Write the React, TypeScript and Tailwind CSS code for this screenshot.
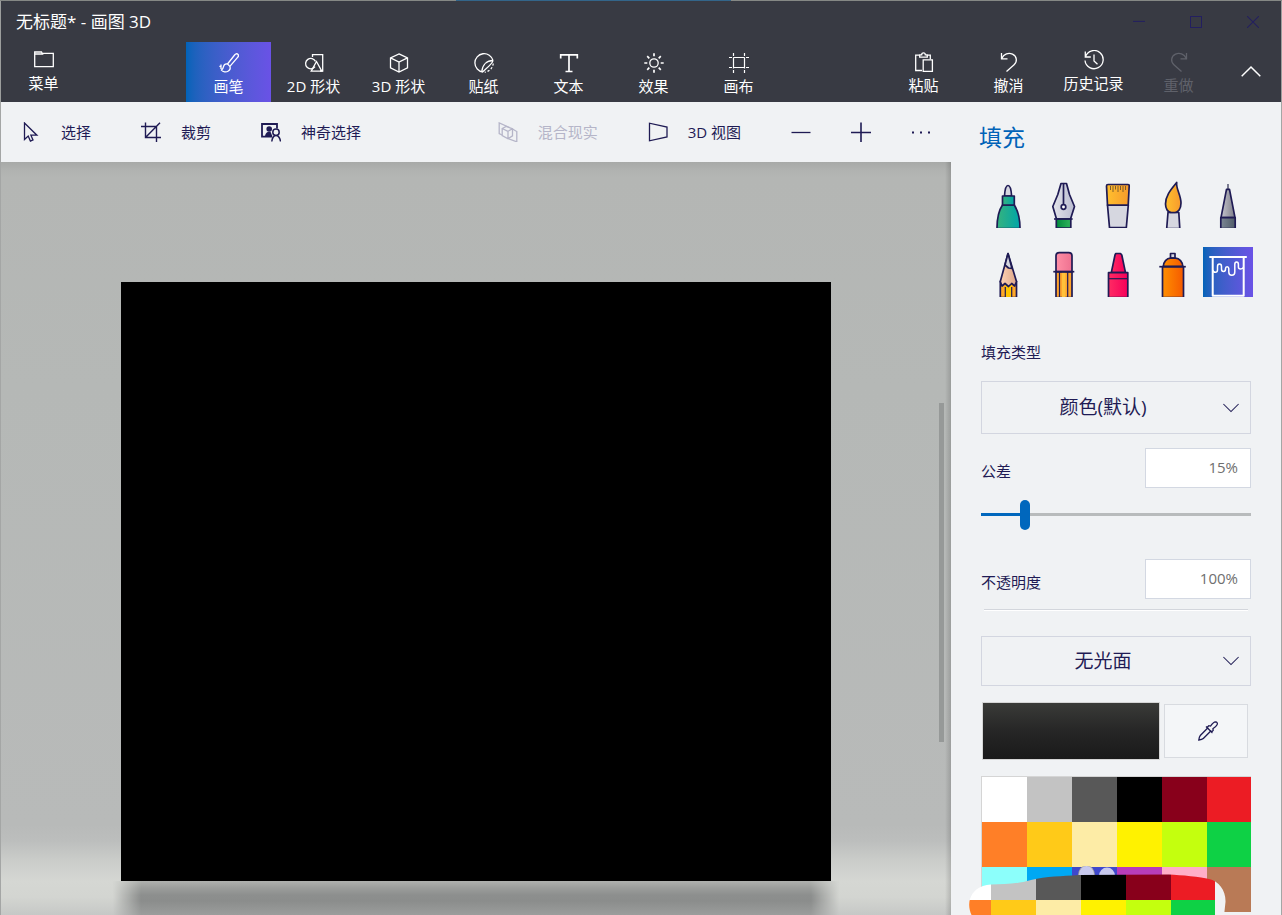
import React, { useState } from 'react';

interface IconProps {
    className?: string;
    children: React.ReactNode;
}

// Thin outline icon on a 20px grid
const Icon: React.FC<IconProps> = ({ className = 'size-5', children }) => (
    <svg
        viewBox="0 0 20 20"
        className={`${className} shrink-0`}
        fill="none"
        stroke="currentColor"
        strokeWidth="1.3"
        aria-hidden="true"
    >
        {children}
    </svg>
);

const icons = {
    menu: <path d="M.7 2h6.8l1 2H.7M.7 1.3v15.4h18.6V3.3H8" />,
    brush: (
        <>
            <path d="M18.8 1.2c-1-1-2.300-.2-3.200.8L8.500 11l2.400 2.400 7.700-9c.9-1 1.200-2.200.2-3.200z" />
            <path d="M8.500 11c-2-.4-3.500.7-4 2.600-.3 1.700-.4 2.200-2 3.500 1.500 1.800 4.500 2.400 6.500 1.200 2-1.100 2.600-3 1.900-4.900M.5 13l2 1.500M2 11.500v4.500" />
        </>
    ),
    shapes2d: (
        <>
            <path d="M8.500 4V1.700h10.200V18H16M11 13.700a5.200 5.200 0 1 1 .5-5.300" />
            <path d="M12.500 8.500L7.200 18.200h10.600z" />
        </>
    ),
    cube: <path d="M10 .9l8.500 3.900v10L10 19l-8.500-4.200v-10zM1.500 4.800L10 9l8.500-4.200M10 9v10" />,
    sticker: (
        <>
            <path d="M9 19A9.200 9.200 0 1 1 19 7.500" />
            <path d="M19 7.500C13 7.500 8.500 11.500 7.800 18.500M19 7.500c-.5 3.500-7.500 8.500-10.500 11.500" />
            <path d="M19.200 10.500a9.500 9.500 0 0 1-8.500 8.700" strokeDasharray="2.200 1.800" />
        </>
    ),
    text: <path d="M1.700 5.500V1.800h16.600v3.700M10 1.800v16.600M6.500 18.500h7" strokeWidth="1.700" />,
    sun: (
        <>
            <circle cx="10" cy="10" r="4.200" />
            <path d="M10 .3v3M10 16.700v3M.3 10h3M16.700 10h3M3.200 3.200l2.100 2.100M14.700 14.700l2.100 2.100M3.200 16.800l2.100-2.100M14.700 5.300l2.100-2.100" strokeWidth="1.700" />
        </>
    ),
    canvas: <path d="M4.500 0v20M15.500 0v20M0 4.500h20M0 14.500h20" strokeWidth="1.200" strokeDasharray="3 1.400 11.200 1.400 3" />,
    paste: (
        <>
            <path d="M8 18.500H1.700V3.200h4M12.300 3.200h4v4M5.700 5.200V2.800h2c0-2.700 3.600-2.700 3.600 0h2v2.400z" />
            <path d="M9.200 7.800h9.200v11.500H9.200z" />
        </>
    ),
    undo: <path d="M2.500 1v5.800h6M2.700 6.500C5 2 9.500.3 13.500 2.200c4.600 2.200 5 7.500 1.600 10.600L7.500 19.500" />,
    history: <path d="M1.300 1.500V7h5.500M1.500 6.500A9.100 9.100 0 1 1 1 10.500M10 4.500V11l3.500 3.200" />,
    redo: <path d="M17.500 1v5.800h-6M17.300 6.500C15 2 10.500.3 6.500 2.200c-4.600 2.200-5 7.500-1.600 10.600l7.600 6.700" />,
    pointer: <path d="M3.500 1v16.500l3.700-3.400 2.200 5 2.600-1.200-2.100-4.700h6z" />,
    crop: <path d="M4.500.5v15h15.500M0 4.500h15.500V20M19 .8L4.500 15.500" strokeWidth="1.400" />,
    magic: (
        <>
            <path d="M16 6.500V2H1v12.700h10" strokeWidth="1.800" />
            <path d="M4 14.500c.2-2.500 1.300-4 3-4.700h2.500l2 4.700z" fill="currentColor" stroke="none" />
            <circle cx="8.200" cy="7" r="2.800" fill="currentColor" stroke="none" />
            <circle cx="15" cy="10.200" r="3.200" fill="#f0f2f4" strokeWidth="1.500" />
            <path d="M10.800 19.500c.4-3.500 1.600-5.500 3.700-6M15.500 13.500c2 .5 3.500 2.500 4 6" strokeWidth="1.500" />
        </>
    ),
    mixed: (
        <>
            <path d="M4 13L1.200 11.500V.9L11.500 5.500" />
            <path d="M10 16.500l8.800 3.300V9.500L14.500 7" />
            <path d="M4.200 6.500l4-2 6.300 2.300v7L10 16.700l-5.800-3.200zM4.200 6.500L10 9.300v7.400M10 9.300l4.500-2.500" />
        </>
    ),
    view3d: <path d="M1.500 1.200v17.600l17.500-3.800V5z" />,
    chevronUp: <path d="M.7 14.300L10 5l9.300 9.300" strokeWidth="1.500" />,
    minus: <path d="M.5 10.500h19" />,
    plus: <path d="M0 10.500h20M10 .5v20" strokeWidth="1.600" />,
    dots: (
        <g fill="currentColor" stroke="none">
            <path d="M1 9.500h2v2H1zM9 9.500h2v2H9zM17 9.500h2v2h-2z" />
        </g>
    ),
    dropper: (
        <>
            <path d="M10.200 6.500L2.300 14.500c-.8.900-1.200 2.200-1.500 4.500 2.200-.2 3.600-.6 4.500-1.500l8-8" />
            <path d="M8 5.500l6.500 6.500M9 6.500l1.800-1.800 1.700.4C14 3 15.500.9 17.400.8c1.900 0 2.400 1.800 1.500 3.200-.8 1.400-2.500 2.600-4 3.700l.3 1.700-1.800 1.800" />
        </>
    ),
};

const tabs = [
    { label: '画笔', icon: icons.brush },
    { label: '2D 形状', icon: icons.shapes2d },
    { label: '3D 形状', icon: icons.cube },
    { label: '贴纸', icon: icons.sticker },
    { label: '文本', icon: icons.text },
    { label: '效果', icon: icons.sun },
    { label: '画布', icon: icons.canvas },
];

const palette = [
    '#ffffff', '#c3c3c3', '#585858', '#000000', '#88001b', '#ec1c24',
    '#ff7f27', '#ffca18', '#fdeca6', '#fff200', '#c4ff0e', '#0ed145',
    '#8cfffb', '#00a8f3', '#3f48cc', '#b83dba', '#ffaec8', '#b97a56',
];

const brushes = [
    {
        name: '马克笔',
        art: (
            <>
                <path d="M21.500 18c.3-5 1.500-10.500 3.500-10.500s3.300 5.500 3.600 10.500z" fill="#d5d6e0" />
                <path d="M19.500 27C16 32 14 40 14 50.500h23C37 40 34.500 32 31.300 27z" fill="url(#teal)" />
                <path d="M19.500 18h11.800v9H19.500z" fill="url(#teal)" />
            </>
        ),
    },
    {
        name: '书法笔',
        art: (
            <>
                <path d="M23 5.500h5.500l3 11 5 12L32.500 41h-14l-3.700-12.500 5-12z" fill="url(#nib)" />
                <path d="M18.300 41h14.500v9H18.300z" fill="url(#green)" />
                <path d="M16 41h18.700M25.500 6v20" />
                <circle cx="25.500" cy="29" r="2.300" fill="#fff" />
            </>
        ),
    },
    {
        name: '油画笔',
        art: (
            <>
                <path d="M14.500 27.200h20.800l-2 22.500H16.500z" fill="#d6d7e0" />
                <path d="M15 6.500h20q1.300 0 1.200 1.500l-1 19.200H14.500L13.500 8q0-1.500 1.500-1.500z" fill="url(#amber)" />
                <path d="M17.500 8v4M20 8v6M22.500 8v3.500M25 8v6M27.500 8v4M30 8v6M32.500 8v4" stroke="#7e5c2b" strokeWidth="1" />
            </>
        ),
    },
    {
        name: '水彩',
        art: (
            <>
                <path d="M20 34.500h10.800l1 16H18.700z" fill="#d6d7e0" />
                <path d="M28.700 4.500c-1 6 4.300 12.500 4.300 20.500 0 6-3 9.500-6 9.500h-3.500c-4 0-6-4.500-6-8.500C17.500 17 24 10.500 28.700 4.500z" fill="url(#amber)" />
            </>
        ),
    },
    {
        name: '像素笔',
        art: (
            <>
                <path d="M25 6v5" stroke="#66677f" />
                <path d="M23.500 11.300h3L32 39.700H18z" fill="url(#gray)" />
                <path d="M17.800 39.700h14.400v10.800H17.800z" fill="url(#slate)" />
            </>
        ),
    },
    {
        name: '铅笔',
        art: (
            <>
                <path d="M17.300 34.500V50.500h16.200v-16l-4-3-8 0z" fill="#ffa827" />
                <path d="M22.300 38h6.500v12.500h-6.500z" fill="#ffc400" stroke="none" />
                <path d="M25 6.500l8.500 28-1.800 4.500-3-2.500-3.200 3-3.500-3-3 2.500-1.700-4.500z" fill="url(#skin)" />
                <path d="M25 6.500l4 15-3.500-.5-3.500-3z" fill="#d6d7e0" />
                <path d="M22.300 40v10M28.700 40v10" strokeWidth="1.200" />
            </>
        ),
    },
    {
        name: '橡皮擦',
        art: (
            <>
                <path d="M18 24.700h16v26H18z" fill="#ffa32b" />
                <path d="M24 25.500h3.500v25H24z" fill="#ffc13b" stroke="none" />
                <path d="M18 24.700V9q0-3.300 3.300-3.300h9.400Q34 5.700 34 9v15.700z" fill="url(#pink)" />
                <path d="M15.300 24.700h21" />
                <path d="M21.500 24.700v26M29.700 24.700v26" strokeWidth="1.200" />
            </>
        ),
    },
    {
        name: '蜡笔',
        art: (
            <>
                <path d="M22.800 6.500h4.700l1.300 1.500 3.700 17.700H18.300L22 8z" fill="url(#red)" />
                <path d="M15.500 25.700h19.300v25H15.500z" fill="url(#red)" />
                <path d="M15.500 31.700h19.300" strokeWidth="1.200" />
            </>
        ),
    },
    {
        name: '喷漆罐',
        art: (
            <>
                <path d="M22.500 6.500h4.500V11h-4.500z" fill="#d6d7e0" />
                <path d="M15.300 19.700c0-5 3.500-8.500 7.200-8.500h5c3.700 0 7.300 3.500 7.300 8.500z" fill="url(#orange)" />
                <path d="M14.500 19.700h21v31h-21z" fill="url(#orange)" />
                <path d="M11.300 19.700h26.500" />
            </>
        ),
    },
    {
        name: '填充',
        art: (
            <g stroke="#fff" fill="none">
                <path d="M6.300 10h37.500M9.700 10v38.700h31V10" strokeWidth="2" />
                <path d="M9.700 23q.5 2.300 2.600 2.300 2.200 0 2.200-2.300v-3.500q0-2.500 2-2.500t2 2.500V22q0 2.500 2 2.500t2-2.500v-.5q0-1.800 1.600-1.800t1.700 1.800V25q0 3.300 3 3.300t3-3.300v-7.500q0-2.500 1.800-2.500t1.800 2.500v2.500q0 2 2.200 2t3-2" strokeWidth="1.500" />
            </g>
        ),
    },
];

// Fills shared by the brush drawings
const BrushGradients: React.FC = () => {
    const fills = [
        ['teal', '#36b37e', '#00a5a8'],
        ['nib', '#e3e4ea', '#b9bbd0'],
        ['green', '#008a3c', '#2fb45a'],
        ['amber', '#ffc02e', '#f79a2c'],
        ['gray', '#c5c5cd', '#7c7c88'],
        ['slate', '#7c8794', '#505c68'],
        ['skin', '#ffd2b3', '#dca78b'],
        ['pink', '#ff8fa6', '#ee7190'],
        ['red', '#ff2b63', '#f5005a'],
        ['orange', '#ff8f00', '#f55a00'],
    ];
    return (
        <svg className="absolute size-0" aria-hidden="true">
            <defs>
                {fills.map(([id, from, to]) => (
                    <linearGradient key={id} id={id}>
                        <stop offset="0" stopColor={from} />
                        <stop offset="1" stopColor={to} />
                    </linearGradient>
                ))}
            </defs>
        </svg>
    );
};

interface RibbonButtonProps {
    label: string;
    icon: React.ReactNode;
    className?: string;
    disabled?: boolean;
    onClick?: () => void;
}

const RibbonButton: React.FC<RibbonButtonProps> = ({ label, icon, className = 'pt-[10px]', disabled, onClick }) => (
    <button
        type="button"
        disabled={disabled}
        onClick={onClick}
        className={`flex h-[60px] w-[85px] flex-col items-center gap-[3px] text-[15px] leading-5 whitespace-nowrap disabled:text-[#5f616a] ${className}`}
    >
        <Icon>{icon}</Icon>
        {label}
    </button>
);

const ToolbarButton: React.FC<RibbonButtonProps> = ({ label, icon, disabled }) => (
    <button
        type="button"
        disabled={disabled}
        className="flex h-full items-center gap-5 pr-[30px] pl-5 text-[15px] leading-5 whitespace-nowrap disabled:text-[#b5b5c8]"
    >
        <Icon>{icon}</Icon>
        {label}
    </button>
);

interface DropDownProps {
    label: string;
    id: string;
    value: string;
    className: string;
}

const DropDown: React.FC<DropDownProps> = ({ label, id, value, className }) => (
    <div className={`relative ${className}`}>
        <select
            id={id}
            aria-label={label}
            defaultValue={value}
            className="size-full appearance-none border border-[#d3d6e0] bg-transparent pr-[38px] pl-3 text-[19px] [text-align-last:center]"
        >
            <option>{value}</option>
        </select>
        <Icon className="pointer-events-none absolute top-1/2 right-3 size-4 -translate-y-1/2">
            <path d="M.5 5L10 14.500l9.500-9.500" />
        </Icon>
    </div>
);

interface PercentFieldProps {
    id: string;
    label: string;
    value: number;
    onChange: (value: number) => void;
    className: string;
}

const PercentField: React.FC<PercentFieldProps> = ({ id, label, value, onChange, className }) => (
    <div className={`flex items-end justify-between ${className}`}>
        <label htmlFor={id} className="pb-[7px] text-[15px] leading-5">{label}</label>
        <input
            id={id}
            type="text"
            value={`${value}%`}
            onChange={(e) => onChange(Math.min(100, parseInt(e.target.value, 10) || 0))}
            className="h-10 w-[106px] border border-[#d3d8e2] bg-white pr-3 pb-0.5 text-right text-[15px] text-[#6f6f6f]"
        />
    </div>
);

const App: React.FC = () => {
    const [activeTab, setActiveTab] = useState('画笔');
    const [activeBrush, setActiveBrush] = useState('填充');
    const [tolerance, setTolerance] = useState(15);
    const [opacity, setOpacity] = useState(100);

    return (
        <div className="flex h-screen flex-col overflow-hidden bg-[#f0f2f4] font-['Open_Sans','Noto_Sans_CJK_SC',sans-serif] text-[#1f1b54]">
            <BrushGradients />
            <div className="flex h-px shrink-0 justify-center bg-[#858885]">
                <div className="mr-[95px] w-[275px] bg-[#33658a]" />
            </div>

            {/* Title bar and ribbon */}
            <header className="shrink-0 border-x border-[#9c9e9d] bg-[#383a43] text-white">
                <div className="flex h-[41px] items-center justify-between pl-[15px]">
                    <h1 className="text-[17px]">无标题* - 画图 3D</h1>
                    <div className="flex h-full items-center text-[#231f60]">
                        <button type="button" aria-label="最小化" className="flex w-[57px] justify-center">
                            <Icon className="size-3"><path d="M0 9h20" strokeWidth="1.700" /></Icon>
                        </button>
                        <button type="button" aria-label="最大化" className="flex w-[57px] justify-center">
                            <Icon className="size-3"><path d="M.8.8h18.400v18.400H.8z" strokeWidth="1.700" /></Icon>
                        </button>
                        <button type="button" aria-label="关闭" className="flex w-[57px] justify-center">
                            <Icon className="size-3"><path d="M0 0l20 20M20 0L0 20" strokeWidth="1.700" /></Icon>
                        </button>
                    </div>
                </div>
                <div className="flex h-[60px]">
                    <RibbonButton label="菜单" icon={icons.menu} className="pt-2" />
                    <nav className="ml-[100px] flex">
                        {tabs.map((tab) => (
                            <RibbonButton
                                key={tab.label}
                                label={tab.label}
                                icon={tab.icon}
                                onClick={() => setActiveTab(tab.label)}
                                className={activeTab === tab.label ? 'bg-linear-to-r from-[#0063b8] to-[#6a52e6] pt-[11px]' : 'pt-[11px]'}
                            />
                        ))}
                    </nav>
                    <div className="ml-auto flex">
                        <RibbonButton label="粘贴" icon={icons.paste} />
                        <RibbonButton label="撤消" icon={icons.undo} />
                        <RibbonButton label="历史记录" icon={icons.history} className="pt-2" />
                        <RibbonButton label="重做" icon={icons.redo} disabled />
                        <button type="button" aria-label="折叠" className="flex w-[60px] items-center justify-center">
                            <Icon>{icons.chevronUp}</Icon>
                        </button>
                    </div>
                </div>
            </header>

            <div className="flex min-h-0 flex-1 border-x border-[#a4a6a5]">
                <main className="flex min-w-0 flex-1 flex-col">
                    {/* Selection and view tools */}
                    <div className="flex h-[60px] shrink-0 items-center">
                        <ToolbarButton label="选择" icon={icons.pointer} />
                        <ToolbarButton label="裁剪" icon={icons.crop} />
                        <ToolbarButton label="神奇选择" icon={icons.magic} />
                        <div className="ml-auto flex h-full">
                            <ToolbarButton label="混合现实" icon={icons.mixed} disabled />
                            <ToolbarButton label="3D 视图" icon={icons.view3d} />
                            <button type="button" aria-label="缩小" className="flex w-[60px] items-center justify-center">
                                <Icon>{icons.minus}</Icon>
                            </button>
                            <button type="button" aria-label="放大" className="flex w-[60px] items-center justify-center">
                                <Icon>{icons.plus}</Icon>
                            </button>
                            <button type="button" aria-label="更多" className="flex w-[60px] items-center justify-center">
                                <Icon>{icons.dots}</Icon>
                            </button>
                        </div>
                    </div>

                    {/* Stage with the canvas standing on a lit floor */}
                    <div className="relative flex flex-1 flex-col bg-[linear-gradient(to_bottom,#a7a9a7_0,#b0b2b0_8px,#b4b6b4_16px,#b5b8b6_30%,#b8bab9_calc(100%_-_90px),#bcbebd_calc(100%_-_74px),#cbcdca_calc(100%_-_54px),#d5d7d3_calc(100%_-_34px),#d3d5d1_calc(100%_-_18px),#c6c8c6_100%)] px-[120px] pt-[120px]">
                        <div className="z-10 flex-1 bg-black" />
                        <div className="-mx-2 h-[34px] bg-[linear-gradient(to_bottom,#afb1ae_0,#9b9d9b_7px,#8d8f8e_14px,#8b8d8c_20px,#9b9d9c_34px)] [mask-image:linear-gradient(to_right,transparent,black_28px,black_calc(100%_-_28px),transparent)]" />
                        <div className="absolute inset-y-0 right-0 w-[6px] bg-linear-to-r from-transparent to-black/15" />
                        <div className="absolute top-[32%] right-[7px] h-[45%] w-[5px] bg-[#969998]" />
                    </div>
                </main>

                {/* Brush settings */}
                <aside className="w-[330px] shrink-0 overflow-hidden px-[30px] pt-[17px]">
                    <h2 className="-ml-0.5 text-[23px] leading-9 text-[#0063b8]">填充</h2>
                    <div className="mt-[23px] ml-0.5 grid w-[270px] grid-cols-5 gap-x-[5px] gap-y-[19px]">
                        {brushes.map((brush) => (
                            <button
                                key={brush.name}
                                type="button"
                                aria-label={brush.name}
                                onClick={() => setActiveBrush(brush.name)}
                                className={activeBrush === brush.name ? 'size-[50px] bg-linear-to-r from-[#0063b8] to-[#6a52e6]' : 'size-[50px]'}
                            >
                                <svg viewBox="0 0 50 50" className="size-[50px]" stroke="#1f1b54" strokeWidth="1.700" strokeLinejoin="round" aria-hidden="true">
                                    {brush.art}
                                </svg>
                            </button>
                        ))}
                    </div>

                    <label htmlFor="fill-type" className="mt-[45px] block text-[15px] leading-5">填充类型</label>
                    <DropDown id="fill-type" label="填充类型" value="颜色(默认)" className="mt-[19px] h-[53px]" />

                    <PercentField id="tolerance" label="公差" value={tolerance} onChange={setTolerance} className="mt-[14px]" />
                    <input
                        type="range"
                        aria-label="公差"
                        value={tolerance}
                        onChange={(e) => setTolerance(Number(e.target.value))}
                        className="mt-3 block h-[30px] w-full appearance-none bg-[length:100%_3px] bg-[position:0_13px] bg-no-repeat [&::-webkit-slider-thumb]:h-[30px] [&::-webkit-slider-thumb]:w-[10px] [&::-webkit-slider-thumb]:appearance-none [&::-webkit-slider-thumb]:rounded-full [&::-webkit-slider-thumb]:bg-[#0067bd]"
                        style={{ backgroundImage: `linear-gradient(to right, #0067bd ${tolerance}%, #b8bbbc ${tolerance}%)` }}
                    />
                    <PercentField id="opacity" label="不透明度" value={opacity} onChange={setOpacity} className="mt-[29px]" />

                    <hr className="mx-[3px] mt-[10px] h-0.5 border-t border-b border-t-[#d3d6dc] border-b-white" />

                    <DropDown id="finish" label="材质" value="无光面" className="mt-[25px] h-[50px]" />

                    <div className="mt-4 flex items-center gap-1 px-px">
                        <button type="button" aria-label="当前颜色" className="h-[58px] w-[178px] border border-[#d5d5d5] bg-linear-to-b from-[#3a3b38] via-[#262626] to-[#1a1a1a]" />
                        <button type="button" aria-label="颜色选取器" className="flex h-[54px] w-[84px] items-center justify-center border border-[#d8dbe0] bg-[#f4f6f8] pl-1">
                            <Icon>{icons.dropper}</Icon>
                        </button>
                    </div>

                    <div className="relative mt-4">
                        <div className="grid grid-cols-[repeat(5,45px)_1fr] border-t border-l border-[#d5d5d5]">
                            {palette.map((color) => (
                                <button key={color} type="button" aria-label={color} className="h-[45px]" style={{ backgroundColor: color }} />
                            ))}
                        </div>
                        {/* Smeared copy of the swatches lying over the last row */}
                        <svg viewBox="0 0 270 50" className="pointer-events-none absolute top-[90px] left-[-12px] h-[50px] w-[270px]" aria-hidden="true">
                            <defs>
                                <clipPath id="smear">
                                    <path d="M3 50C0 44-.5 38 1 33C3 26 10 19 22 18.500C36 18.500 48 18 62 14C78 10 92 10.500 110 9L200 8.500C212 9 232 11 240 13C250 15 257 25 256.500 36L255 50z" />
                                </clipPath>
                            </defs>
                            <ellipse cx="117.500" cy="9" rx="8" ry="9.500" fill="#c8c9ee" stroke="#a9a68c" strokeWidth=".7" />
                            <ellipse cx="138" cy="10" rx="8" ry="8.500" fill="#c8c9ee" />
                            <g clipPath="url(#smear)">
                                <path d="M0 0h22v34H0z" fill="#fff" />
                                <path d="M22 0h45v34H22z" fill="#c3c3c3" />
                                <path d="M67 0h45v34H67z" fill="#585858" />
                                <path d="M112 0h45v34h-45z" fill="#000" />
                                <path d="M157 0h45v34h-45z" fill="#88001b" />
                                <path d="M202 0h44v34h-44z" fill="#ec1c24" />
                                <path d="M0 34h22v16H0z" fill="#ff7f27" />
                                <path d="M22 34h45v16H22z" fill="#ffca18" />
                                <path d="M67 34h45v16H67z" fill="#fdeca6" />
                                <path d="M112 34h45v16h-45z" fill="#fff200" />
                                <path d="M157 34h45v16h-45z" fill="#c4ff0e" />
                                <path d="M202 34h44v16h-44z" fill="#0ed145" />
                                <path d="M246 0h24v50h-24z" fill="#f0f2f4" />
                            </g>
                        </svg>
                    </div>
                </aside>
            </div>
        </div>
    );
};

export default App;
